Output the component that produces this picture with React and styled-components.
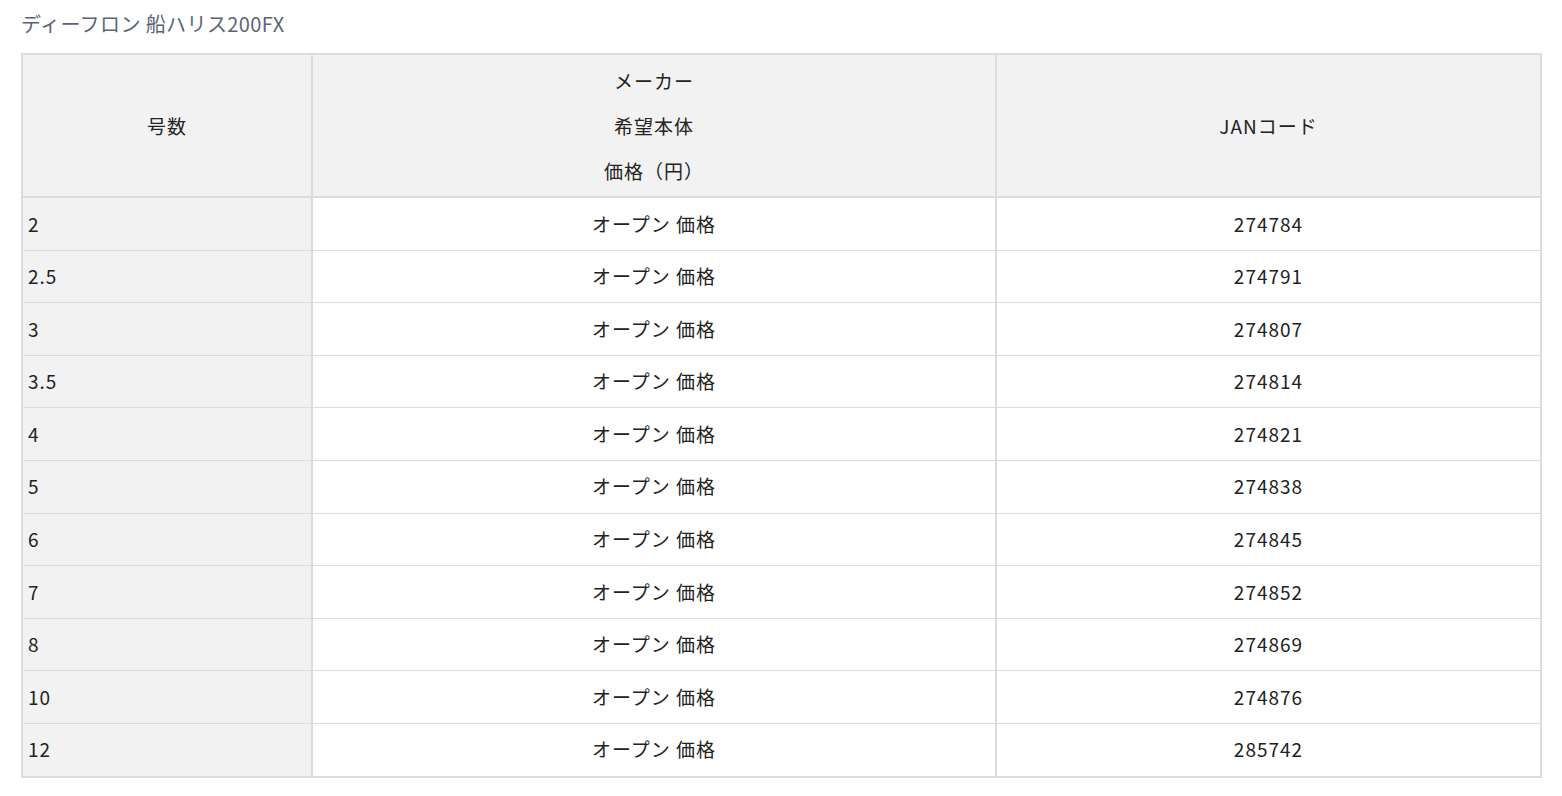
import React from "react";
import styled, { createGlobalStyle } from "styled-components";

const GlobalStyle = createGlobalStyle`
	html, body {
		margin: 0;
		padding: 0;
		background: #ffffff;
	}
	body {
		font-family: "Noto Sans CJK JP", "Noto Sans", sans-serif;
		color: #222;
	}
`;

const Page = styled.div`
	padding: 11px 21px 0 21px;
`;

const Title = styled.h2`
	margin: 0 0 16px 0;
	font-size: 20px;
	font-weight: 400;
	line-height: 26px;
	letter-spacing: 0.4px;
	color: #5b6577;
`;

const Table = styled.table`
	width: 1519px;
	table-layout: fixed;
	border-collapse: collapse;
	border: 2px solid #dcdcdc;
	font-size: 19px;
	letter-spacing: 1px;
`;

const HeadCell = styled.th`
	background: #f2f2f2;
	font-weight: 400;
	text-align: center;
	line-height: 45px;
	padding: 3px 4px;
	border: 1px solid #dcdcdc;
	border-bottom: 2px solid #dcdcdc;
	border-right-width: ${(p) => (p.last ? "1px" : "2px")};
`;

const Cell = styled.td`
	background: ${(p) => (p.side ? "#f2f2f2" : "#ffffff")};
	text-align: ${(p) => (p.side ? "left" : "center")};
	line-height: 44.6px;
	padding: 3.5px 5px;
	border: 1px solid #dcdcdc;
	border-right-width: ${(p) => (p.last ? "1px" : "2px")};
	white-space: nowrap;
`;

const rows = [
	["2", "274784"],
	["2.5", "274791"],
	["3", "274807"],
	["3.5", "274814"],
	["4", "274821"],
	["5", "274838"],
	["6", "274845"],
	["7", "274852"],
	["8", "274869"],
	["10", "274876"],
	["12", "285742"],
];

const App = () => {
	return (
		<Page>
			<GlobalStyle />
			<Title>ディーフロン 船ハリス200FX</Title>
			<Table>
				<colgroup>
					<col style={{ width: 290 }} />
					<col style={{ width: 684 }} />
					<col style={{ width: 545 }} />
				</colgroup>
				<thead>
					<tr>
						<HeadCell>号数</HeadCell>
						<HeadCell>
							メーカー
							<br />
							希望本体
							<br />
							価格（円）
						</HeadCell>
						<HeadCell last>JANコード</HeadCell>
					</tr>
				</thead>
				<tbody>
					{rows.map(([size, jan]) => (
						<tr key={jan}>
							<Cell side>{size}</Cell>
							<Cell>オープン 価格</Cell>
							<Cell last>{jan}</Cell>
						</tr>
					))}
				</tbody>
			</Table>
		</Page>
	);
};

export default App;
